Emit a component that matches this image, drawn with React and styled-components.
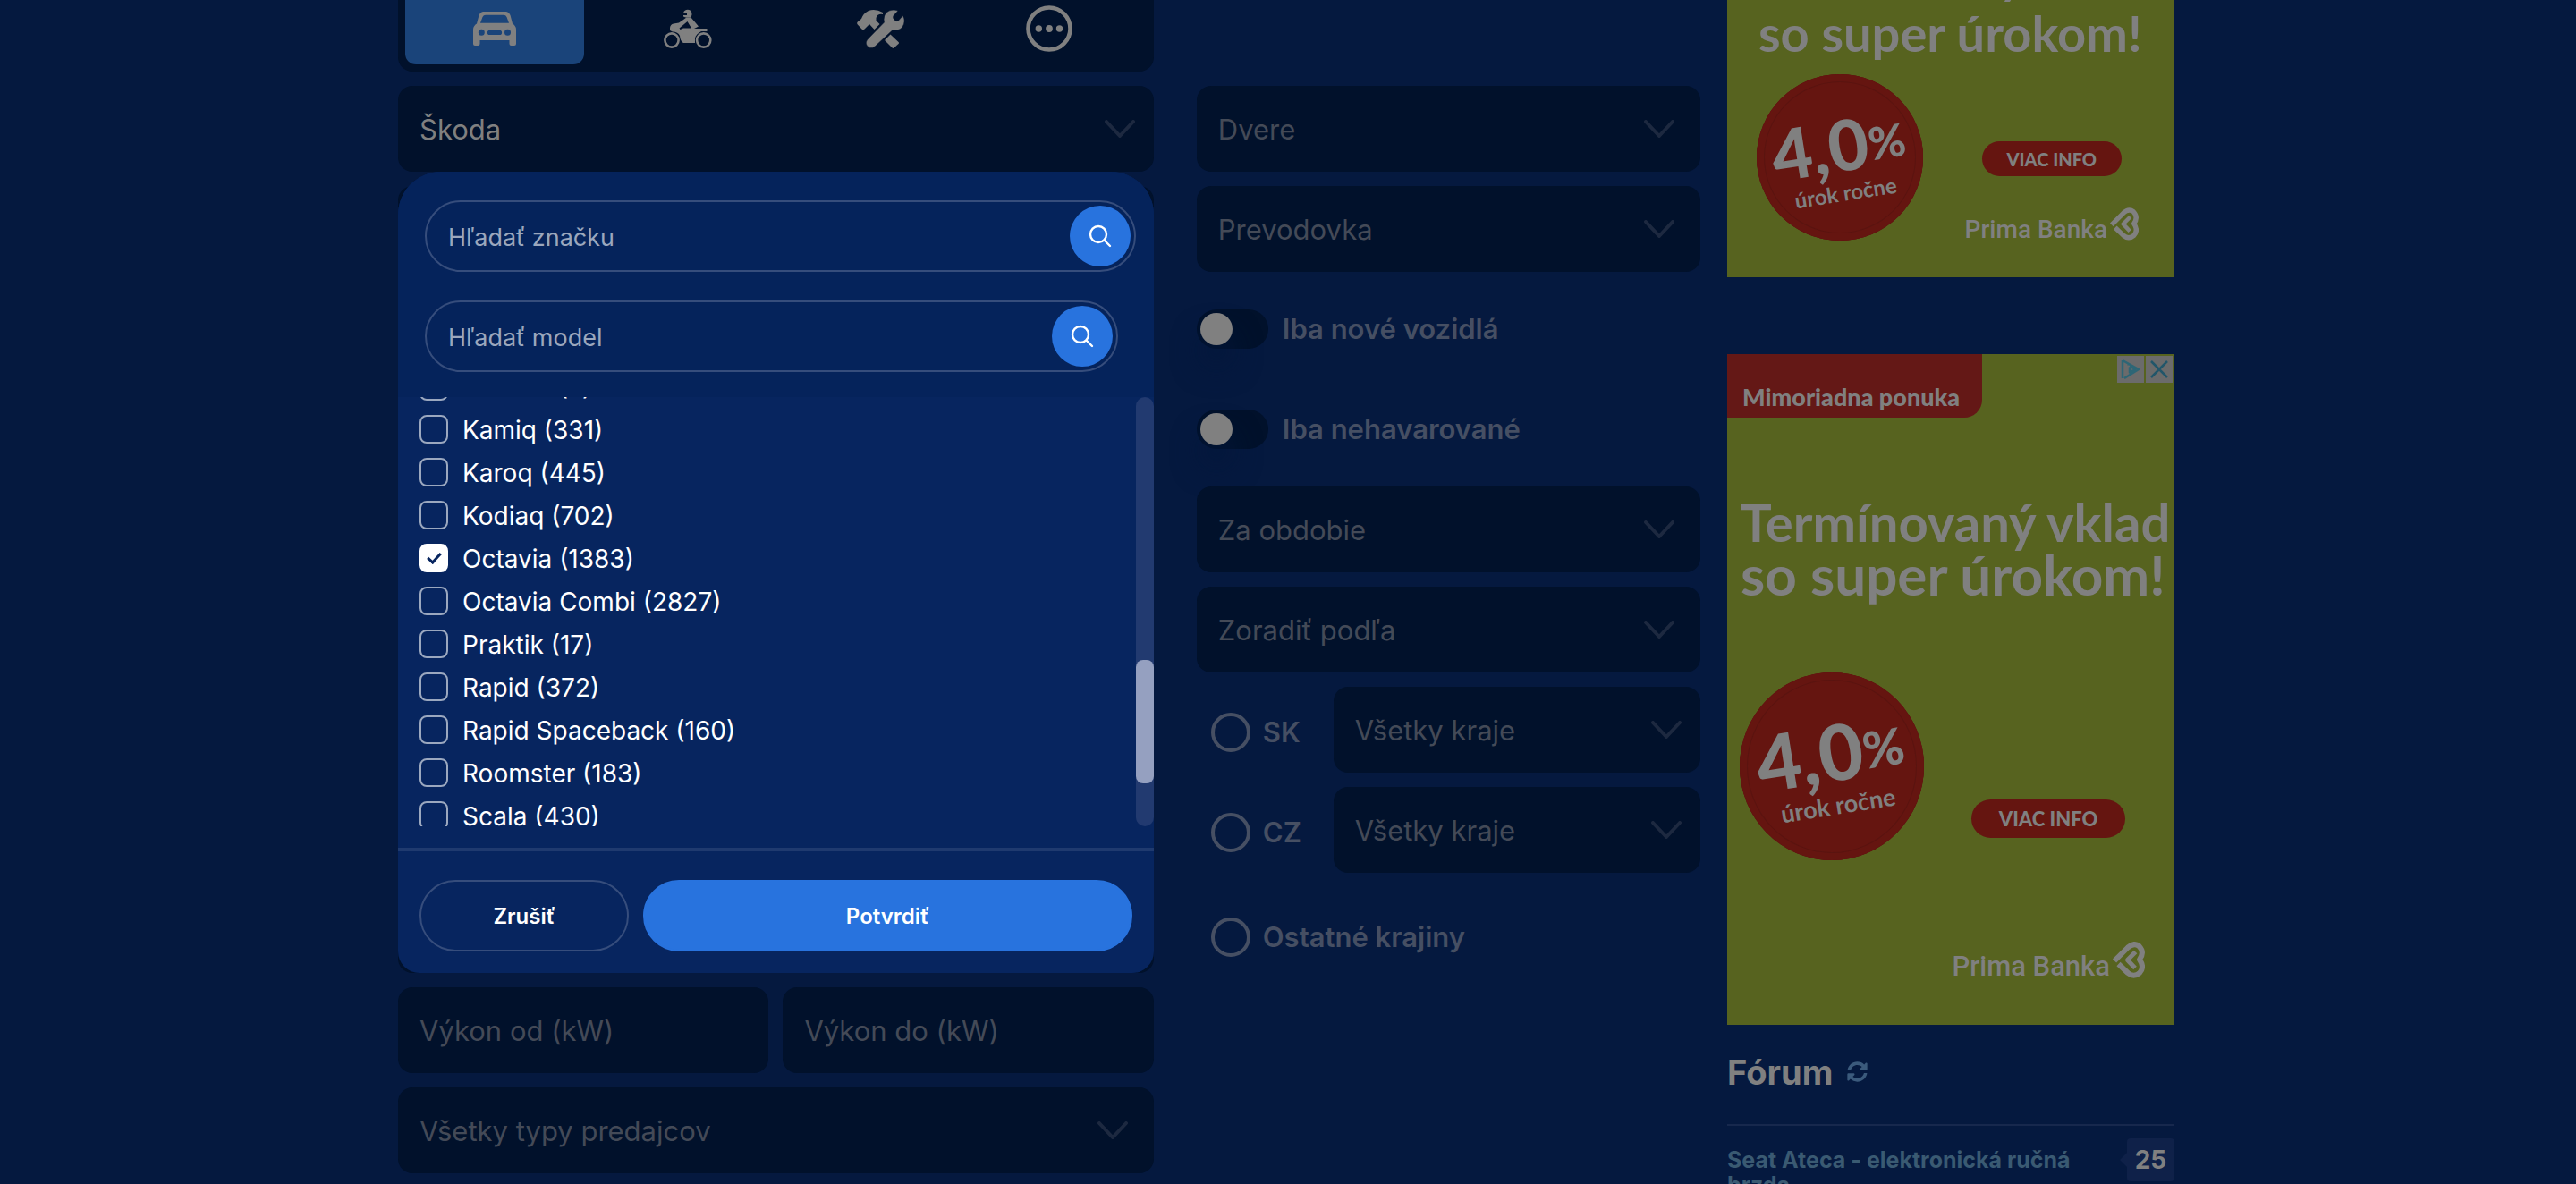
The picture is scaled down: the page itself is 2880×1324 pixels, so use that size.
import React, { useLayoutEffect, useRef } from 'react';
import styled, { createGlobalStyle, css } from 'styled-components';
import { FaSyncAlt } from 'react-icons/fa';

const GlobalStyle = createGlobalStyle`
  *, *::before, *::after { box-sizing: border-box; }
  body {
    margin: 0;
    background: #05193f;
    color: #808080;
    font-family: Inter, "Liberation Sans", sans-serif;
  }
  button, input, select { font: inherit; color: inherit; margin: 0; }
`;

const Page = styled.div`
  height: 100vh;
  overflow: hidden;
  padding-right: 4px;
`;

const Container = styled.div`
  display: flex;
  gap: 30px;
  max-width: 1986px;
  margin: 0 auto;
`;

const Form = styled.form`
  flex: 1;
  min-width: 0;
  display: grid;
  grid-template-columns: minmax(0, 3fr) minmax(0, 2fr);
  gap: 48px;
  align-items: start;
`;

const Column = styled.div`
  display: flex;
  flex-direction: column;
  gap: 16px;
  padding-top: ${(p) => (p.$offset ? 96 : 0)}px;
`;

const Tabs = styled.nav`
  display: flex;
  gap: 16px;
  height: 80px;
  padding: 0 8px 8px;
  border-radius: 0 0 16px 16px;
  background: #01112b;
`;

const Tab = styled.button`
  display: flex;
  align-items: center;
  justify-content: center;
  flex: 0 1 ${(p) => (p.$narrow ? 144 : 200)}px;
  padding: 0 0 8px;
  border: 0;
  border-radius: 0 0 12px 12px;
  color: #808080;
  background: ${(p) => (p.$active ? '#1a447a' : 'transparent')};
`;

const fieldBox = css`
  width: 100%;
  height: 96px;
  padding: 0 24px;
  border: 0;
  border-radius: 16px;
  background: #01112b;
  font-size: 31px;
  outline: 0;
`;

const FieldFrame = styled.div`
  flex: 1;
  min-width: 0;
  display: grid;
  align-items: center;
  > * { grid-area: 1 / 1; }
`;

const Select = styled.select`
  ${fieldBox}
  appearance: none;
  color: #444a57;
`;

const BrandButton = styled.button`
  ${fieldBox}
  text-align: left;
  color: #808080;
`;

const TextField = styled.input`
  ${fieldBox}
  color: #808080;
  &::placeholder { color: #444a57; opacity: 1; }
`;

const Chevron = styled.svg`
  justify-self: end;
  width: 34px;
  height: 20px;
  margin-right: ${(p) => (p.$tight ? 21 : 29)}px;
  pointer-events: none;
`;

const FieldPair = styled.div`
  display: grid;
  grid-template-columns: 1fr 1fr;
  gap: 16px;
`;

const PickerSlot = styled.div`
  border-radius: 16px;
  background: #01112b;
`;

const Picker = styled.section`
  margin-top: -16px;
  border-radius: 48px 48px 24px 24px;
  overflow: hidden;
  background: #07255f;
`;

const PickerHead = styled.div`
  display: flex;
  flex-direction: column;
  gap: 32px;
  padding: 32px 20px 28px 30px;
  background: #05235b;
`;

const SearchBox = styled.div`
  display: flex;
  align-items: center;
  height: 80px;
  margin-right: ${(p) => (p.$inset ? 20 : 0)}px;
  padding: 0 4px 0 24px;
  border: 2px solid #364d7c;
  border-radius: 40px;
`;

const SearchInput = styled.input`
  flex: 1;
  min-width: 0;
  height: 60px;
  padding: 2px 0 0;
  border: 0;
  outline: 0;
  background: transparent;
  font-size: 27px;
  color: #fff;
  &::placeholder { color: #9ba7bd; opacity: 1; }
`;

const SearchButton = styled.button`
  display: grid;
  place-items: center;
  width: 68px;
  height: 68px;
  padding: 0;
  border: 0;
  border-radius: 50%;
  background: #2873de;
`;

const ListArea = styled.div`
  display: flex;
  height: 480px;
`;

const ModelList = styled.div`
  flex: 1;
  overflow-y: scroll;
  scrollbar-width: none;
  padding-left: 24px;
`;

const ModelRow = styled.label`
  display: flex;
  align-items: center;
  gap: 16px;
  height: 48px;
  font-size: 28px;
  line-height: 32px;
  color: #fff;
  span { padding-top: 2px; }
`;

const Check = styled.input`
  appearance: none;
  flex: none;
  width: 32px;
  height: 32px;
  border: 2px solid #9ba8bf;
  border-radius: 8px;
  display: grid;
  place-items: center;
  &:checked { background: #fff; border-color: #fff; }
  &:checked::before {
    content: '';
    width: 9px;
    height: 15px;
    margin-bottom: 4px;
    border: solid #07255f;
    border-width: 0 3px 3px 0;
    transform: rotate(42deg);
  }
`;

const Track = styled.div`
  width: 20px;
  padding-top: 294px;
  border-radius: 10px;
  background: #223a70;
`;

const Thumb = styled.div`
  height: 138px;
  border-radius: 8px;
  background: #95a0c0;
`;

const PickerFoot = styled.div`
  display: grid;
  grid-template-columns: 3fr 7fr;
  gap: 16px;
  margin-top: 24px;
  padding: 32px 24px 24px;
  border-top: 4px solid #1f3a6f;
`;

const Action = styled.button`
  height: 80px;
  padding: 0;
  border: 2px solid ${(p) => (p.$primary ? '#2873de' : '#364d7c')};
  border-radius: 40px;
  background: ${(p) => (p.$primary ? '#2873de' : 'transparent')};
  color: #fff;
  font-size: 24px;
  font-weight: 600;
`;

const OptionRow = styled.div`
  display: flex;
  align-items: center;
  height: ${(p) => (p.$tall ? 106 : 96)}px;
`;

const OptionLabel = styled.label`
  display: flex;
  align-items: center;
  gap: ${(p) => (p.$radio ? 14 : 16)}px;
  padding: ${(p) => (p.$radio ? '6px 0 0 16px' : '0')};
  min-width: ${(p) => (p.$radio ? 153 : 0)}px;
  font-size: 31px;
  font-weight: 600;
  line-height: 40px;
  color: #464f63;
`;

const Switch = styled.input`
  appearance: none;
  width: 80px;
  height: 44px;
  padding: 4px;
  border-radius: 22px;
  background: #01112b;
  &::before {
    content: '';
    display: block;
    width: 36px;
    height: 36px;
    border-radius: 50%;
    background: #808080;
    box-shadow: 0 24px 32px #04173b;
  }
`;

const Radio = styled.input`
  appearance: none;
  width: 44px;
  height: 44px;
  border: 4px solid #464f63;
  border-radius: 50%;
`;

const Sidebar = styled.aside`
  flex: 0 0 500px;
  min-width: 0;
`;

const Ad = styled.div`
  display: flex;
  flex-direction: column;
  position: relative;
  overflow: hidden;
  background: #57631f;
  color: #808080;
  font-family: Lato, "Open Sans", sans-serif;
  font-weight: 700;
`;

const AdCut = styled(Ad)`
  justify-content: flex-end;
  height: 310px;
  margin-bottom: 86px;
  padding: 0 40px 41px 33px;
`;

const AdFull = styled(Ad)`
  height: 750px;
  padding-bottom: 52px;
`;

const AdTitle = styled.p`
  margin: 0;
  padding-left: ${(p) => (p.$large ? 15 : 2)}px;
  margin-top: ${(p) => (p.$large ? 88 : 0)}px;
  font-size: ${(p) => (p.$large ? 58 : 52)}px;
  line-height: ${(p) => (p.$large ? 58 : 64)}px;
  white-space: nowrap;
  span { display: block; }
  span + span { font-size: ${(p) => (p.$large ? 62 : 56)}px; }
`;

const AdTag = styled.div`
  width: 285px;
  height: 71px;
  padding: 32px 0 0 17px;
  border-radius: 0 0 20px 0;
  background: #641816;
  font-size: 27px;
  font-weight: 900;
  line-height: 32px;
`;

const AdRow = styled.div`
  display: flex;
  justify-content: space-between;
  align-items: flex-end;
  margin-top: ${(p) => (p.$large ? 81 : 14)}px;
  padding: ${(p) => (p.$large ? '0 55px 0 14px' : '0')};
`;

const AdSide = styled.div`
  display: flex;
  flex-direction: column;
  align-items: center;
  gap: 35px;
  padding-bottom: ${(p) => (p.$raised ? 25 : 0)}px;
`;

const Seal = styled.div`
  display: flex;
  align-items: center;
  justify-content: center;
  width: ${(p) => (p.$large ? 206 : 186)}px;
  height: ${(p) => (p.$large ? 210 : 186)}px;
  border-radius: 50%;
  background: #651510;
  box-shadow: inset 0 0 0 8px #651510, inset 0 0 0 9px #5a1410;
`;

const SealText = styled.div`
  padding-top: 8px;
  transform: rotate(-9deg);
  text-align: center;
  strong {
    display: flex;
    align-items: flex-start;
    justify-content: center;
    font-size: ${(p) => (p.$large ? 86 : 78)}px;
    line-height: ${(p) => (p.$large ? 80 : 72)}px;
  }
  sup {
    padding-top: 8px;
    font-size: ${(p) => (p.$large ? 56 : 50)}px;
    line-height: ${(p) => (p.$large ? 72 : 64)}px;
  }
  span {
    font-size: ${(p) => (p.$large ? 27 : 24)}px;
    line-height: ${(p) => (p.$large ? 40 : 36)}px;
  }
`;

const AdButton = styled.button`
  width: ${(p) => (p.$large ? 172 : 156)}px;
  height: ${(p) => (p.$large ? 43 : 39)}px;
  padding: 0;
  border: 0;
  border-radius: 22px;
  background: #651510;
  font-size: ${(p) => (p.$large ? 22 : 20)}px;
  font-weight: 900;
`;

const Bank = styled.div`
  display: flex;
  align-items: flex-end;
  gap: 3px;
  font-family: Roboto, "Noto Sans", sans-serif;
  font-weight: 500;
  font-size: ${(p) => (p.$large ? 31 : 28)}px;
  line-height: ${(p) => (p.$large ? 26 : 24)}px;
  white-space: nowrap;
  svg {
    width: ${(p) => (p.$large ? 36 : 32)}px;
    height: ${(p) => (p.$large ? 41 : 37)}px;
  }
`;

const BankCorner = styled.div`
  display: flex;
  justify-content: flex-end;
  margin-top: auto;
  padding-right: 33px;
`;

const AdControls = styled.div`
  position: absolute;
  top: 2px;
  right: 2px;
  display: flex;
  gap: 2px;
`;

const AdControl = styled.button`
  display: grid;
  place-items: center;
  width: 30px;
  height: 30px;
  padding: 0;
  border: 0;
  background: #6b6b6b;
`;

const ForumHead = styled.div`
  display: flex;
  align-items: center;
  gap: 16px;
  height: 111px;
  padding-bottom: 6px;
  color: #3b5a7c;
`;

const ForumTitle = styled.h2`
  margin: 0;
  font-size: 38px;
  font-weight: 700;
  line-height: 48px;
  color: #808080;
`;

const ForumItem = styled.div`
  display: flex;
  justify-content: space-between;
  align-items: flex-start;
  gap: 40px;
  border-top: 2px solid #17284d;
  padding-top: 14px;
`;

const ForumLink = styled.a`
  padding-top: 10px;
  font-size: 25px;
  font-weight: 700;
  line-height: 28px;
  color: #3a5a72;
  text-decoration: none;
`;

const Badge = styled.span`
  position: relative;
  flex: none;
  width: 53px;
  border-radius: 4px;
  background: #0f2149;
  font-size: 28px;
  font-weight: 700;
  line-height: 48px;
  text-align: center;
  &::before {
    content: '';
    position: absolute;
    left: -8px;
    top: 16px;
    border: 8px solid transparent;
    border-left: 0;
    border-right-color: #0f2149;
  }
`;

function Down({ tight }) {
  return (
    <Chevron $tight={tight} viewBox="0 0 34 20" fill="none" stroke="#1d2940" strokeWidth="4" strokeLinecap="round" strokeLinejoin="round" aria-hidden="true">
      <path d="M2 2 17 18 32 2" />
    </Chevron>
  );
}

function SelectField({ label, tight }) {
  return (
    <FieldFrame>
      <Select aria-label={label}>
        <option>{label}</option>
      </Select>
      <Down tight={tight} />
    </FieldFrame>
  );
}

function Search({ label, inset }) {
  return (
    <SearchBox $inset={inset}>
      <SearchInput type="text" aria-label={label} placeholder={label} />
      <SearchButton type="button" aria-label={label}>
        <svg width="26" height="26" viewBox="0 0 26 26" fill="none" stroke="#fff" strokeWidth="2.4" strokeLinecap="round">
          <circle cx="11" cy="11" r="9" />
          <path d="m17.5 17.5 6.5 6.5" />
        </svg>
      </SearchButton>
    </SearchBox>
  );
}

const CarIcon = () => (
  <svg width="48" height="38" viewBox="0 0 48 38" fill="currentColor">
    <path fillRule="evenodd" d="M11 0H37Q40 .5 41.500 4L44 13.500Q48 16 48 20V36Q48 38 46 38H42.500Q40.500 38 40.500 36V32H7.500V36Q7.500 38 5.500 38H2Q0 38 0 36V20Q0 16 4 13.500L6.500 4Q8 .5 11 0ZM14 3.700Q11.500 3.700 10.500 6L8 12.700H40L37.500 6Q36.500 3.700 34 3.700ZM9.300 19.800A3.500 3.500 0 1 0 9.300 26.800A3.500 3.500 0 1 0 9.300 19.800ZM38.500 19.800A3.500 3.500 0 1 0 38.500 26.800A3.500 3.500 0 1 0 38.500 19.800ZM18.500 20.800A2.500 2.500 0 0 0 18.500 26H29.500A2.500 2.500 0 0 0 29.500 20.800Z" />
  </svg>
);

const MotoIcon = () => (
  <svg width="54" height="44" viewBox="0 0 54 44" fill="currentColor">
    <circle cx="9" cy="35" r="7.600" fill="none" stroke="currentColor" strokeWidth="2.600" />
    <circle cx="44.700" cy="35" r="7.600" fill="none" stroke="currentColor" strokeWidth="2.600" />
    <path d="M22 4.500Q23 .8 27 .8Q32 1.500 31.500 6.500L30.500 9.500H24.500L22 8.500V7H26V4.500Z" />
    <path fillRule="evenodd" d="M7 21Q7.500 17 11 16.500L17 15.500L25.500 9.500H30.500L39 19.500L34 22H48.500V25H42Q36 28 35 33V38H22Q18.500 36 18 30Q16 25.500 10 25.500L7 24ZM17.500 21.500L18.500 23L22 21.500H31L26.500 14Z" />
  </svg>
);

const ToolsIcon = () => (
  <svg width="54" height="44" viewBox="0 0 54 44" fill="currentColor">
    <path d="M.8 14.500L5 11Q7 5 13 2Q21-.5 29 4V6Q23 5 21.500 10V13L25.500 17L19.500 23L14 17L8.500 22.500Q7 24 5.500 22.500L.8 17.500Q-.5 16 .8 14.500Z" />
    <path d="M37.500 28.500L46.500 37Q47.500 38 46.500 39L41.500 43.500Q40.500 44.300 39.500 43.500L31 35Z" />
    <path d="M30.500 15Q29 8 33 4Q38-.5 46 2L41 7.500Q40 9 41 11L43.500 13.500Q45 14 46.500 13L51.500 7.500Q55 14 51 20Q47 25 40 23.500L20 42Q16 45 12 42Q8.500 38 12 34Z" stroke="#01112b" strokeWidth=".5" />
  </svg>
);

const MoreIcon = () => (
  <svg width="52" height="52" viewBox="0 0 52 52" fill="currentColor">
    <circle cx="26" cy="26" r="23.500" fill="none" stroke="currentColor" strokeWidth="4.600" />
    <circle cx="14.300" cy="26" r="3.700" />
    <circle cx="26" cy="26" r="3.900" />
    <circle cx="37.500" cy="26" r="3.700" />
  </svg>
);

function PrimaBanka({ large }) {
  return (
    <Bank $large={large}>
      Prima Banka
      <svg viewBox="0 0 36 41" fill="none" stroke="currentColor" strokeLinejoin="round">
        <path strokeWidth="6" d="M2 21.500 17 6.500Q23.500.5 29.500 5Q36 12 30 20Q36 28.500 30 35Q23.500 40.500 17 35L6.500 25" />
        <path strokeWidth="5" d="M25.500 11.500 16.500 20.500 25 29.500" />
      </svg>
    </Bank>
  );
}

function RateSeal({ large }) {
  return (
    <Seal $large={large}>
      <SealText $large={large}>
        <strong>4,0<sup>%</sup></strong>
        <span>úrok ročne</span>
      </SealText>
    </Seal>
  );
}

const models = [
  ['Forman', 7],
  ['Kamiq', 331],
  ['Karoq', 445],
  ['Kodiaq', 702],
  ['Octavia', 1383],
  ['Octavia Combi', 2827],
  ['Praktik', 17],
  ['Rapid', 372],
  ['Rapid Spaceback', 160],
  ['Roomster', 183],
  ['Scala', 430],
];

function ModelPicker() {
  const list = useRef(null);
  useLayoutEffect(() => {
    list.current.scrollTop = 36;
  }, []);
  return (
    <PickerSlot>
      <Picker>
        <PickerHead>
          <Search label="Hľadať značku" />
          <Search label="Hľadať model" inset />
        </PickerHead>
        <ListArea>
          <ModelList ref={list}>
            {models.map(([name, count]) => (
              <ModelRow key={name}>
                <Check type="checkbox" defaultChecked={name === 'Octavia'} />
                <span>{`${name} (${count})`}</span>
              </ModelRow>
            ))}
          </ModelList>
          <Track>
            <Thumb />
          </Track>
        </ListArea>
        <PickerFoot>
          <Action type="button">Zrušiť</Action>
          <Action type="button" $primary>Potvrdiť</Action>
        </PickerFoot>
      </Picker>
    </PickerSlot>
  );
}

export default function App() {
  return (
    <Page>
      <GlobalStyle />
      <Container>
        <Form>
          <Column>
            <Tabs>
              <Tab type="button" $active aria-label="Autá"><CarIcon /></Tab>
              <Tab type="button" aria-label="Motorky"><MotoIcon /></Tab>
              <Tab type="button" aria-label="Diely"><ToolsIcon /></Tab>
              <Tab type="button" $narrow aria-label="Ostatné"><MoreIcon /></Tab>
            </Tabs>
            <FieldFrame>
              <BrandButton type="button">Škoda</BrandButton>
              <Down tight />
            </FieldFrame>
            <ModelPicker />
            <FieldPair>
              <TextField type="text" aria-label="Výkon od (kW)" placeholder="Výkon od (kW)" />
              <TextField type="text" aria-label="Výkon do (kW)" placeholder="Výkon do (kW)" />
            </FieldPair>
            <SelectField label="Všetky typy predajcov" />
          </Column>

          <Column $offset>
            <SelectField label="Dvere" />
            <SelectField label="Prevodovka" />
            <OptionRow>
              <OptionLabel><Switch type="checkbox" />Iba nové vozidlá</OptionLabel>
            </OptionRow>
            <OptionRow>
              <OptionLabel><Switch type="checkbox" />Iba nehavarované</OptionLabel>
            </OptionRow>
            <SelectField label="Za obdobie" />
            <SelectField label="Zoradiť podľa" />
            <OptionRow>
              <OptionLabel $radio><Radio type="radio" name="country" />SK</OptionLabel>
              <SelectField label="Všetky kraje" tight />
            </OptionRow>
            <OptionRow>
              <OptionLabel $radio><Radio type="radio" name="country" />CZ</OptionLabel>
              <SelectField label="Všetky kraje" tight />
            </OptionRow>
            <OptionRow $tall>
              <OptionLabel $radio><Radio type="radio" name="country" />Ostatné krajiny</OptionLabel>
            </OptionRow>
          </Column>
        </Form>

        <Sidebar>
          <AdCut>
            <AdTitle>
              <span>Termínovaný vklad</span>
              <span>so super úrokom!</span>
            </AdTitle>
            <AdRow>
              <RateSeal />
              <AdSide>
                <AdButton type="button">VIAC INFO</AdButton>
                <PrimaBanka />
              </AdSide>
            </AdRow>
          </AdCut>
          <AdFull>
            <AdTag>Mimoriadna ponuka</AdTag>
            <AdControls>
              <AdControl type="button" aria-label="Informácie o reklame">
                <svg width="24" height="24" viewBox="0 0 24 24" fill="none" stroke="#2d6676" strokeWidth="2.500" strokeLinejoin="round">
                  <path d="M3 2v20M3 2l18 10L5 22M11 9.500v6l6-3.500-6-3.500" />
                  <path d="M9.500 6.500v1" />
                </svg>
              </AdControl>
              <AdControl type="button" aria-label="Zavrieť reklamu">
                <svg width="20" height="20" viewBox="0 0 20 20" stroke="#22566a" strokeWidth="2.500">
                  <path d="M1 1l18 18M19 1 1 19" />
                </svg>
              </AdControl>
            </AdControls>
            <AdTitle $large>
              <span>Termínovaný vklad</span>
              <span>so super úrokom!</span>
            </AdTitle>
            <AdRow $large>
              <RateSeal large />
              <AdSide $raised>
                <AdButton type="button" $large>VIAC INFO</AdButton>
              </AdSide>
            </AdRow>
            <BankCorner>
              <PrimaBanka large />
            </BankCorner>
          </AdFull>
          <ForumHead>
            <ForumTitle>Fórum</ForumTitle>
            <FaSyncAlt size={23} />
          </ForumHead>
          <ForumItem>
            <ForumLink href="#forum">Seat Ateca - elektronická ručná brzda</ForumLink>
            <Badge>25</Badge>
          </ForumItem>
        </Sidebar>
      </Container>
    </Page>
  );
}
